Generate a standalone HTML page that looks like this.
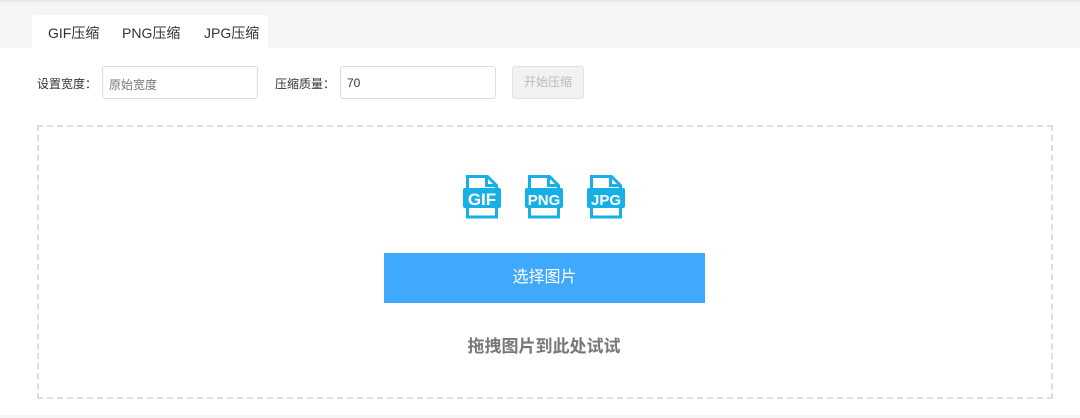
<!DOCTYPE html>
<html><head><meta charset="utf-8"><style>
*{box-sizing:border-box;margin:0;padding:0}
body{width:1080px;height:418px;background:#fff;font-family:"Liberation Sans","Noto Sans CJK SC",sans-serif;position:relative;overflow:hidden;color:#333}
.hdr{position:absolute;left:0;top:0;width:1080px;height:48px;background:#f5f5f5;box-shadow:inset 0 3px 3px -2px #ddd}
.tabs{position:absolute;left:32px;top:15px;width:236px;height:34px;background:#fff;border-radius:3px 3px 0 0}
.tab{position:absolute;top:23px;font-size:14px;color:#333}
.lbl{position:absolute;top:75px;font-size:12px;color:#333}
.inp{position:absolute;top:66px;height:33px;border:1px solid #ddd;border-radius:3px;font-size:12px;padding:9px 0 0 6px}
.btn{position:absolute;left:512px;top:66px;width:72px;height:33px;background:#f2f2f2;border:1px solid #e2e2e2;border-radius:3px;font-size:12px;color:#bbb;text-align:center;line-height:31px}
.box{position:absolute;left:37px;top:125px;width:1016px;height:274px;border:2px dashed #ddd}
.sel{position:absolute;left:384px;top:253px;width:321px;height:50px;background:#3fa9fe;color:#fff;font-size:16px;text-align:center;line-height:50px}
.drag{position:absolute;left:4px;width:1080px;top:332px;text-align:center;font-size:17px;font-weight:bold;color:#777}
.foot{position:absolute;left:0;top:415px;width:1080px;height:3px;background:#f5f5f5}
</style></head><body>
<div class="hdr"></div>
<div class="tabs"></div>
<div class="tab" style="left:48px">GIF压缩</div>
<div class="tab" style="left:122px">PNG压缩</div>
<div class="tab" style="left:204px">JPG压缩</div>
<div class="lbl" style="left:37px">设置宽度：</div>
<div class="inp" style="left:102px;width:156px;color:#777">原始宽度</div>
<div class="lbl" style="left:275px">压缩质量：</div>
<div class="inp" style="left:340px;width:156px;color:#333">70</div>
<div class="btn">开始压缩</div>
<div class="box"></div>
<svg style="position:absolute;left:0;top:0" width="1080" height="418">
<g fill="none" stroke="#17b0e6" stroke-width="3">
<path d="M467.5 176.5h20l9 9v31.5h-29z"/><path d="M486.5 176.5v9h9"/>
<path d="M529.5 176.5h20l9 9v31.5h-29z"/><path d="M548.5 176.5v9h9"/>
<path d="M591.5 176.5h20l9 9v31.5h-29z"/><path d="M610.5 176.5v9h9"/>
</g>
<g fill="#17b0e6"><rect x="463" y="188" width="38" height="20" rx="2"/><rect x="525" y="188" width="38" height="20" rx="2"/><rect x="587" y="188" width="38" height="20" rx="2"/></g>
<g fill="#fff" font-family="Liberation Sans,sans-serif" font-weight="bold" font-size="17" text-anchor="middle">
<text x="482" y="205">GIF</text><text x="544" y="205" font-size="15">PNG</text><text x="606" y="205" font-size="15">JPG</text></g>
</svg>
<div class="sel">选择图片</div>
<div class="drag">拖拽图片到此处试试</div>
<div class="foot"></div>
</body></html>
